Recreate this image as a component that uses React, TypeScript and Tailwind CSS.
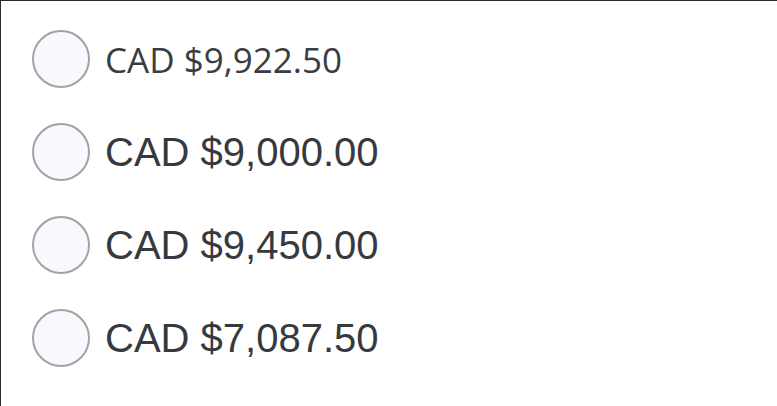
import React from "react";

const rows = [
  { label: "CAD $9,922.50", font: "first" },
  { label: "CAD $9,000.00", font: "arial" },
  { label: "CAD $9,450.00", font: "arial" },
  { label: "CAD $7,087.50", font: "arial" },
];

export default function App() {
  return (
    <div className="w-[777px] h-[406px] bg-white border-t border-l border-[#2b2b2b] overflow-hidden">
      <div className="flex flex-col gap-[35px] pt-[29px] pl-[31px]">
        {rows.map((r, i) => (
          <label key={i} className="flex items-center gap-[15px] h-[58px]">
            <span className="w-[58px] h-[58px] rounded-full border-2 border-[#a3a3a3] bg-[#f8f9fe] shrink-0" />
            {r.font === "first" ? (
              <span className="text-[35px] leading-none text-[#3a3d44] [font-family:'Open_Sans',sans-serif]">
                {r.label}
              </span>
            ) : (
              <span className="text-[40px] leading-none text-[#363a40] [font-family:'Liberation_Sans',Arial,sans-serif]">
                {r.label}
              </span>
            )}
          </label>
        ))}
      </div>
    </div>
  );
}
